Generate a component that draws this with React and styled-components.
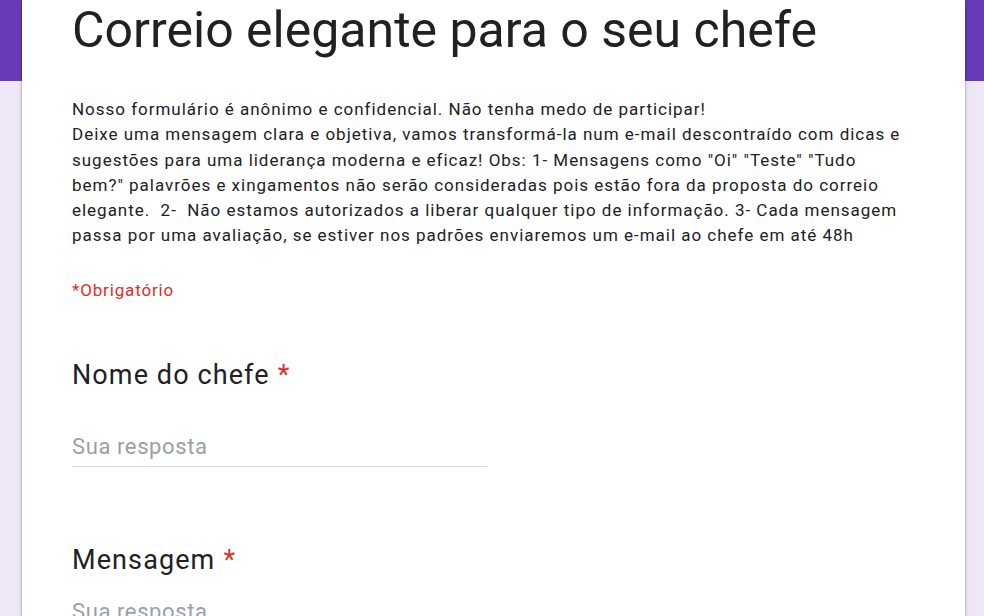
import React from "react";
import styled, { createGlobalStyle } from "styled-components";

const Global = createGlobalStyle`
  html, body { margin: 0; padding: 0; }
  body {
    background: linear-gradient(to bottom, #673ab7 0, #673ab7 81px, #ede7f6 81px, #ede7f6 100%);
    min-height: 616px;
    overflow: hidden;
    font-family: Roboto, "Liberation Sans", Arial, sans-serif;
  }
`;

const Page = styled.div`
  display: flex;
  padding-left: 22px;
  height: 616px;
`;

const Card = styled.main`
  width: 943px;
  background: #ffffff;
  box-shadow: 0 0 2px rgba(0, 0, 0, 0.28), 0 2px 4px rgba(0, 0, 0, 0.18);
  padding: 0 56px 0 50px;
  box-sizing: border-box;
  display: flex;
  flex-direction: column;
`;

const Title = styled.h1`
  margin: 0;
  padding-top: 2px;
  font-size: 50px;
  line-height: 56px;
  font-weight: 400;
  color: #202124;
  white-space: nowrap;
`;

const Description = styled.div`
  margin-top: 39px;
  font-size: 17px;
  line-height: 25.3px;
  letter-spacing: 0.98px;
  color: #202124;
  white-space: pre-wrap;
`;

const Required = styled.div`
  margin-top: 29px;
  font-size: 17px;
  line-height: 24px;
  letter-spacing: 0.85px;
  color: #d93025;
`;

const Question = styled.section`
  display: flex;
  flex-direction: column;
  margin-top: ${(p) => p.$gap}px;
`;

const Label = styled.div`
  font-size: 27px;
  line-height: 32px;
  letter-spacing: 1.1px;
  color: #202124;
`;

const Star = styled.span`
  color: #d93025;
  margin-left: 8px;
`;

const Answer = styled.div`
  margin-top: ${(p) => p.$space}px;
  width: 415px;
  font-size: 22px;
  line-height: 28px;
  letter-spacing: 0.6px;
  color: #9aa0a6;
  padding-bottom: 5px;
  border-bottom: 1.5px solid #dadce0;
`;

const text = `Nosso formulário é anônimo e confidencial. Não tenha medo de participar!
Deixe uma mensagem clara e objetiva, vamos transformá-la num e-mail descontraído com dicas e sugestões para uma liderança moderna e eficaz! Obs: 1- Mensagens como "Oi" "Teste" "Tudo bem?" palavrões e xingamentos não serão consideradas pois estão fora da proposta do correio elegante.  2-  Não estamos autorizados a liberar qualquer tipo de informação. 3- Cada mensagem passa por uma avaliação, se estiver nos padrões enviaremos um e-mail ao chefe em até 48h`;

export default function App() {
  return (
    <>
      <Global />
      <Page>
        <Card>
          <Title>Correio elegante para o seu chefe</Title>
          <Description>{text}</Description>
          <Required>*Obrigatório</Required>
          <Question $gap={57}>
            <Label>
              Nome do chefe<Star>*</Star>
            </Label>
            <Answer $space={42}>Sua resposta</Answer>
          </Question>
          <Question $gap={77}>
            <Label>
              Mensagem<Star>*</Star>
            </Label>
            <Answer $space={22}>Sua resposta</Answer>
          </Question>
        </Card>
      </Page>
    </>
  );
}
